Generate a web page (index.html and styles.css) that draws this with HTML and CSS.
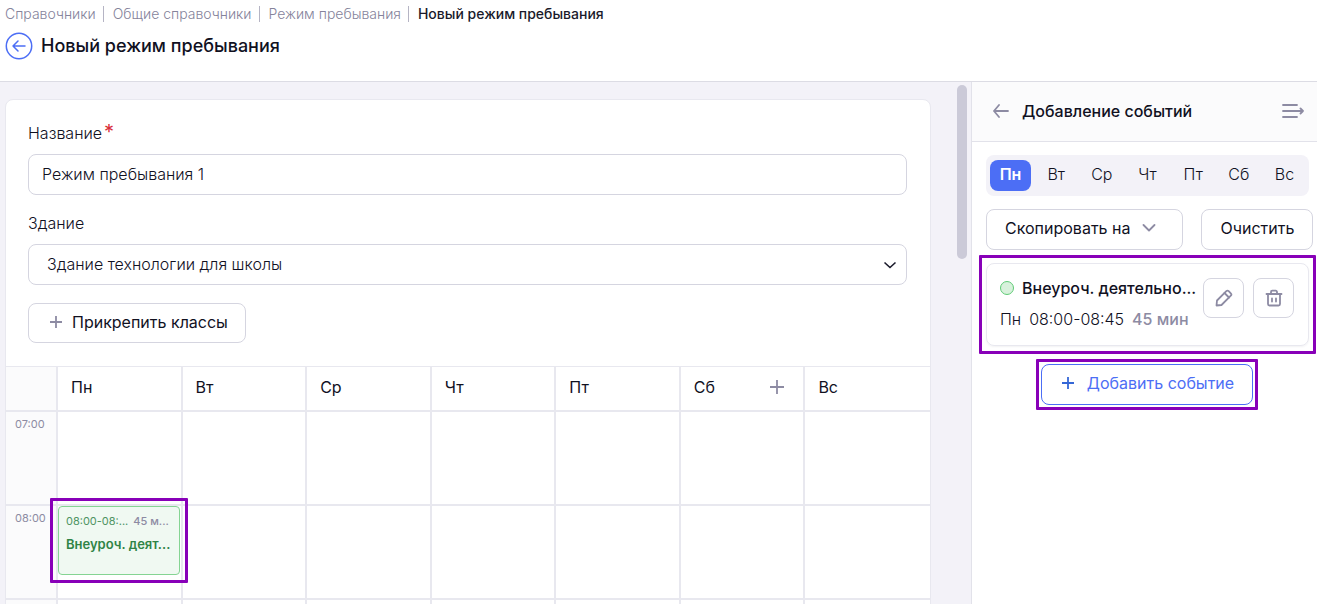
FILE: index.html
```html
<!DOCTYPE html>
<html lang="ru">
<head>
    <meta charset="UTF-8">
    <meta name="viewport" content="width=device-width, initial-scale=1.0">
    <title>Новый режим пребывания</title>
    <link rel="stylesheet" href="styles.css">
</head>
<body>
    <header class="page-header">
        <nav class="breadcrumbs">
            <a href="#">Справочники</a>
            <a href="#">Общие справочники</a>
            <a href="#">Режим пребывания</a>
            <span class="current">Новый режим пребывания</span>
        </nav>
        <div class="title-row">
            <button type="button" class="back-button" aria-label="Назад">
                <svg width="28" height="28" viewBox="0 0 28 28">
                    <circle cx="14" cy="14" r="12.7"/>
                    <path d="M20 14H8M13 9l-5 5 5 5"/>
                </svg>
            </button>
            <h1>Новый режим пребывания</h1>
        </div>
    </header>

    <div class="layout">
        <main class="content">
            <section class="card">
                <form class="mode-form">
                    <label for="mode-name">Название<span class="required">*</span></label>
                    <input type="text" class="form-input" id="mode-name" value="Режим пребывания 1">

                    <label for="building">Здание</label>
                    <div class="select-wrap">
                        <select class="form-input form-select" id="building">
                            <option>Здание технологии для школы</option>
                        </select>
                        <svg class="select-arrow" width="14" height="8" viewBox="0 0 14 8"><path d="M1.500 1.500L7 6.500l5.500-5"/></svg>
                    </div>

                    <button type="button" class="button attach-button">
                        <svg class="icon" width="12" height="12" viewBox="0 0 12 12"><path d="M6 0v12M0 6h12"/></svg>
                        Прикрепить классы
                    </button>
                </form>

                <table class="schedule">
                    <thead>
                        <tr>
                            <th class="time"></th>
                            <th>Пн</th>
                            <th>Вт</th>
                            <th>Ср</th>
                            <th>Чт</th>
                            <th>Пт</th>
                            <th>
                                <div class="day-head">
                                    Сб
                                    <button type="button" class="add-day" aria-label="Добавить">
                                        <svg class="icon" width="14" height="14" viewBox="0 0 14 14"><path d="M7 0v14M0 7h14"/></svg>
                                    </button>
                                </div>
                            </th>
                            <th>Вс</th>
                        </tr>
                    </thead>
                    <tbody>
                        <tr>
                            <td class="time">07:00</td>
                            <td></td><td></td><td></td><td></td><td></td><td></td><td></td>
                        </tr>
                        <tr>
                            <td class="time">08:00</td>
                            <td>
                                <div class="event highlight">
                                    <div class="event-time">
                                        <span>08:00-08:...</span>
                                        <span class="event-length">45 м...</span>
                                    </div>
                                    <div class="event-name">Внеуроч. деят...</div>
                                </div>
                            </td>
                            <td></td><td></td><td></td><td></td><td></td><td></td>
                        </tr>
                        <tr>
                            <td class="time"></td>
                            <td></td><td></td><td></td><td></td><td></td><td></td><td></td>
                        </tr>
                    </tbody>
                </table>
            </section>
            <div class="scroll-rail"><div class="scroll-thumb"></div></div>
        </main>

        <aside class="sidebar">
            <div class="sidebar-header">
                <button type="button" class="icon-button" aria-label="Назад">
                    <svg class="icon" width="16" height="14" viewBox="0 0 16 14"><path d="M15 7H1M6 1L1 7l5 6"/></svg>
                </button>
                <h2>Добавление событий</h2>
                <button type="button" class="icon-button" aria-label="Свернуть">
                    <svg class="icon" width="22" height="16" viewBox="0 0 22 16"><path d="M1 2h14M1 8h20M1 14h14M18.500 5.500L21 8l-2.500 2.500"/></svg>
                </button>
            </div>

            <div class="sidebar-body">
                <div class="days">
                    <button type="button" class="day active">Пн</button>
                    <button type="button" class="day">Вт</button>
                    <button type="button" class="day">Ср</button>
                    <button type="button" class="day">Чт</button>
                    <button type="button" class="day">Пт</button>
                    <button type="button" class="day">Сб</button>
                    <button type="button" class="day">Вс</button>
                </div>

                <div class="actions">
                    <button type="button" class="button copy-button">
                        Скопировать на
                        <svg class="icon" width="14" height="8" viewBox="0 0 14 8"><path d="M1.500 1L7 6.500 12.500 1"/></svg>
                    </button>
                    <button type="button" class="button">Очистить</button>
                </div>

                <div class="event-card highlight">
                    <div class="event-info">
                        <div class="event-title"><span class="dot"></span>Внеуроч. деятельно...</div>
                        <div class="event-when"><span>Пн</span><span>08:00-08:45</span><span class="event-length">45 мин</span></div>
                    </div>
                    <button type="button" class="square-button" aria-label="Редактировать">
                        <svg class="icon" width="18" height="18" viewBox="0 0 18 18">
                            <path d="M1.500 16.500l.5-5L11.300 2.200a1.700 1.700 0 0 1 2.400 0l2.100 2.100a1.700 1.700 0 0 1 0 2.400L6.500 16z"/>
                            <path d="M9.500 4l4.500 4.500"/>
                        </svg>
                    </button>
                    <button type="button" class="square-button" aria-label="Удалить">
                        <svg class="icon" width="18" height="18" viewBox="0 0 18 18">
                            <path d="M1.500 5h15M3 5v10a1.500 1.500 0 0 0 1.500 1.500h9a1.500 1.500 0 0 0 1.500-1.500V5M6 5V3a1.300 1.300 0 0 1 1.300-1.300h3.400A1.300 1.300 0 0 1 12 3v2M7 9.500v3M11 9.500v3"/>
                        </svg>
                    </button>
                </div>

                <button type="button" class="button add-button highlight">
                    <svg class="icon" width="12" height="12" viewBox="0 0 12 12"><path d="M6 0v12M0 6h12"/></svg>
                    Добавить событие
                </button>
            </div>
        </aside>
    </div>
</body>
</html>
```
FILE: styles.css
```css
* {
    box-sizing: border-box;
}

body {
    font-family: 'Inter', sans-serif;
    font-size: 16px;
    font-weight: 300;
    line-height: 20px;
    margin: 0;
    height: 100vh;
    display: flex;
    flex-direction: column;
    overflow: hidden;
    background-color: #fff;
    color: #11111f;
}

button, input, select {
    font: inherit;
    color: inherit;
}

button {
    padding: 0;
    border: none;
    background: none;
    cursor: pointer;
}

svg {
    display: block;
    flex-shrink: 0;
    fill: none;
}

.icon {
    stroke: #8d8ba3;
    stroke-width: 1.800;
    stroke-linecap: round;
    stroke-linejoin: round;
}

/* header */
.page-header {
    flex-shrink: 0;
    height: 82px;
    padding: 4px 5px 0;
    border-bottom: 1px solid #dcdce4;
}

.breadcrumbs {
    display: flex;
    font-size: 14px;
    color: #85839b;
}

.breadcrumbs a {
    color: inherit;
    text-decoration: none;
    margin-right: 9px;
    padding-right: 8px;
    background: linear-gradient(#b5b4c4, #b5b4c4) right center / 1px 16px no-repeat;
}

.breadcrumbs .current {
    color: #1a1a2b;
    font-weight: 500;
}

.title-row {
    display: flex;
    align-items: center;
    gap: 8px;
    margin-top: 8px;
}

.back-button svg {
    stroke: #4c6ef5;
    stroke-width: 1.500;
    stroke-linecap: round;
    stroke-linejoin: round;
}

h1 {
    margin: 0;
    font-size: 18px;
    font-weight: 500;
}

/* layout */
.layout {
    flex: 1;
    min-height: 0;
    display: flex;
}

.content {
    flex: 1;
    min-width: 0;
    display: flex;
    overflow: hidden;
    background-color: #f3f2f8;
    padding: 17px 0 0 5px;
}

.card {
    flex: 1;
    min-width: 0;
    align-self: flex-start;
    background-color: #fff;
    border: 1px solid #e8e8ef;
    border-radius: 8px;
}

.scroll-rail {
    width: 40px;
    display: flex;
    justify-content: flex-end;
    padding-right: 4px;
    margin-top: -14px;
}

.scroll-thumb {
    width: 10px;
    height: 174px;
    border-radius: 5px;
    background-color: #cbcad8;
}

/* form */
.mode-form {
    display: flex;
    flex-direction: column;
    align-items: flex-start;
    padding: 23px 23px 23px 22px;
}

.mode-form label {
    margin-bottom: 11px;
}

.required {
    margin-left: 2px;
    font-size: 20px;
    font-weight: 400;
    line-height: 16px;
    color: #d92d3a;
}

.form-input {
    width: 100%;
    height: 41px;
    padding: 0 13px 2px;
    margin-bottom: 18px;
    background-color: #fff;
    border: 1px solid #d5d5e0;
    border-radius: 8px;
}

.select-wrap {
    position: relative;
    width: 100%;
}

.form-select {
    appearance: none;
    display: block;
    padding: 0 18px 2px;
}

.select-arrow {
    position: absolute;
    right: 10px;
    top: 17px;
    stroke: #1a1a2b;
    stroke-width: 1.600;
}

.button {
    display: flex;
    align-items: center;
    justify-content: center;
    height: 41px;
    padding: 0 18px 3px;
    background-color: #fff;
    border: 1px solid #d5d5e0;
    border-radius: 8px;
    font-weight: 400;
    white-space: nowrap;
}

.attach-button {
    gap: 10px;
    height: 40px;
    padding: 0 17px 2px 21px;
}

/* schedule */
.schedule {
    width: 100%;
    table-layout: fixed;
    border-collapse: separate;
    border-spacing: 0;
    border-top: 1px solid #e8e8ef;
}

.schedule th,
.schedule td {
    height: 94px;
    padding: 0;
    border: solid #e8e8ef;
    border-width: 0 2px 2px 0;
    vertical-align: top;
}

.schedule th {
    height: 45px;
    padding: 0 13px 3px;
    font-weight: 400;
    text-align: left;
    vertical-align: middle;
}

.schedule tr > :last-child {
    border-right: none;
}

.schedule .time {
    width: 52px;
    padding: 2px 0 0 9px;
    background-color: #fbfbfc;
    font-size: 11px;
    font-weight: 400;
    color: #8d8ba3;
}

.day-head {
    display: flex;
    align-items: center;
    justify-content: space-between;
}

.add-day {
    padding: 0 6px;
}

.highlight {
    position: relative;
}

.highlight::after {
    content: '';
    position: absolute;
    inset: -9px;
    border: 3px solid #8800b8;
    border-radius: 1px;
    pointer-events: none;
}

.event {
    height: 69px;
    margin-right: 1px;
    padding: 4px 7px;
    background-color: #f0f9f2;
    border: 1px solid #85d493;
    border-radius: 4px;
    white-space: nowrap;
}

.event-time {
    display: flex;
    gap: 5px;
    font-size: 11px;
    font-weight: 400;
    color: #4e9463;
}

.event-length {
    font-weight: 500;
    color: #8d8ba3;
}

.event-name {
    margin-top: 3px;
    font-size: 13px;
    font-weight: 600;
    color: #2f8446;
}

/* sidebar */
.sidebar {
    width: 346px;
    flex-shrink: 0;
    border-left: 1px solid #e2e2ea;
}

.sidebar-header {
    display: flex;
    align-items: center;
    gap: 13px;
    height: 60px;
    padding: 0 13px 1px 21px;
    background-color: #fbfbfc;
    border-bottom: 1px solid #e2e2ea;
}

.sidebar-header h2 {
    flex: 1;
    margin: 0;
    font-size: 16px;
    font-weight: 500;
}

.sidebar-body {
    display: flex;
    flex-direction: column;
    padding: 13px 4px 0 14px;
}

.days {
    display: flex;
    justify-content: space-between;
    padding: 5px 4px;
    margin-right: 4px;
    background-color: #f3f2f8;
    border-radius: 8px;
}

.day {
    width: 41px;
    height: 31px;
    padding-bottom: 3px;
    border-radius: 8px;
}

.day.active {
    background-color: #4c6ef5;
    color: #fff;
    font-weight: 600;
}

.actions {
    display: flex;
    gap: 18px;
    margin: 13px 0;
}

.copy-button {
    flex: 1;
    gap: 12px;
    padding-right: 26px;
}

.event-card {
    display: flex;
    align-items: flex-start;
    gap: 9px;
    height: 83px;
    padding: 14px 14px 0 13px;
    margin-right: 4px;
    border: 1px solid #e8e8ef;
    border-radius: 8px;
    box-shadow: 0 1px 2px rgba(30, 30, 60, 0.06);
}

.event-card::after {
    inset: -9px -8px;
}

.event-info {
    flex: 1;
    min-width: 0;
    white-space: nowrap;
}

.event-title {
    display: flex;
    align-items: center;
    gap: 8px;
    font-weight: 500;
}

.dot {
    width: 14px;
    height: 14px;
    flex-shrink: 0;
    background-color: #d8f1dc;
    border: 1px solid #5fcb76;
    border-radius: 50%;
}

.event-when {
    display: flex;
    gap: 8px;
    margin-top: 11px;
}

.square-button {
    display: flex;
    align-items: center;
    justify-content: center;
    width: 41px;
    height: 40px;
    border: 1px solid #d5d5e0;
    border-radius: 8px;
}

.add-button {
    align-self: center;
    gap: 13px;
    margin: 18px 5px 0 0;
    padding: 0 18px 3px 20px;
    border-color: #4c6ef5;
    color: #4c6ef5;
}

.add-button::after {
    inset: -6px;
}

.add-button .icon {
    stroke: #3567d6;
}
```
